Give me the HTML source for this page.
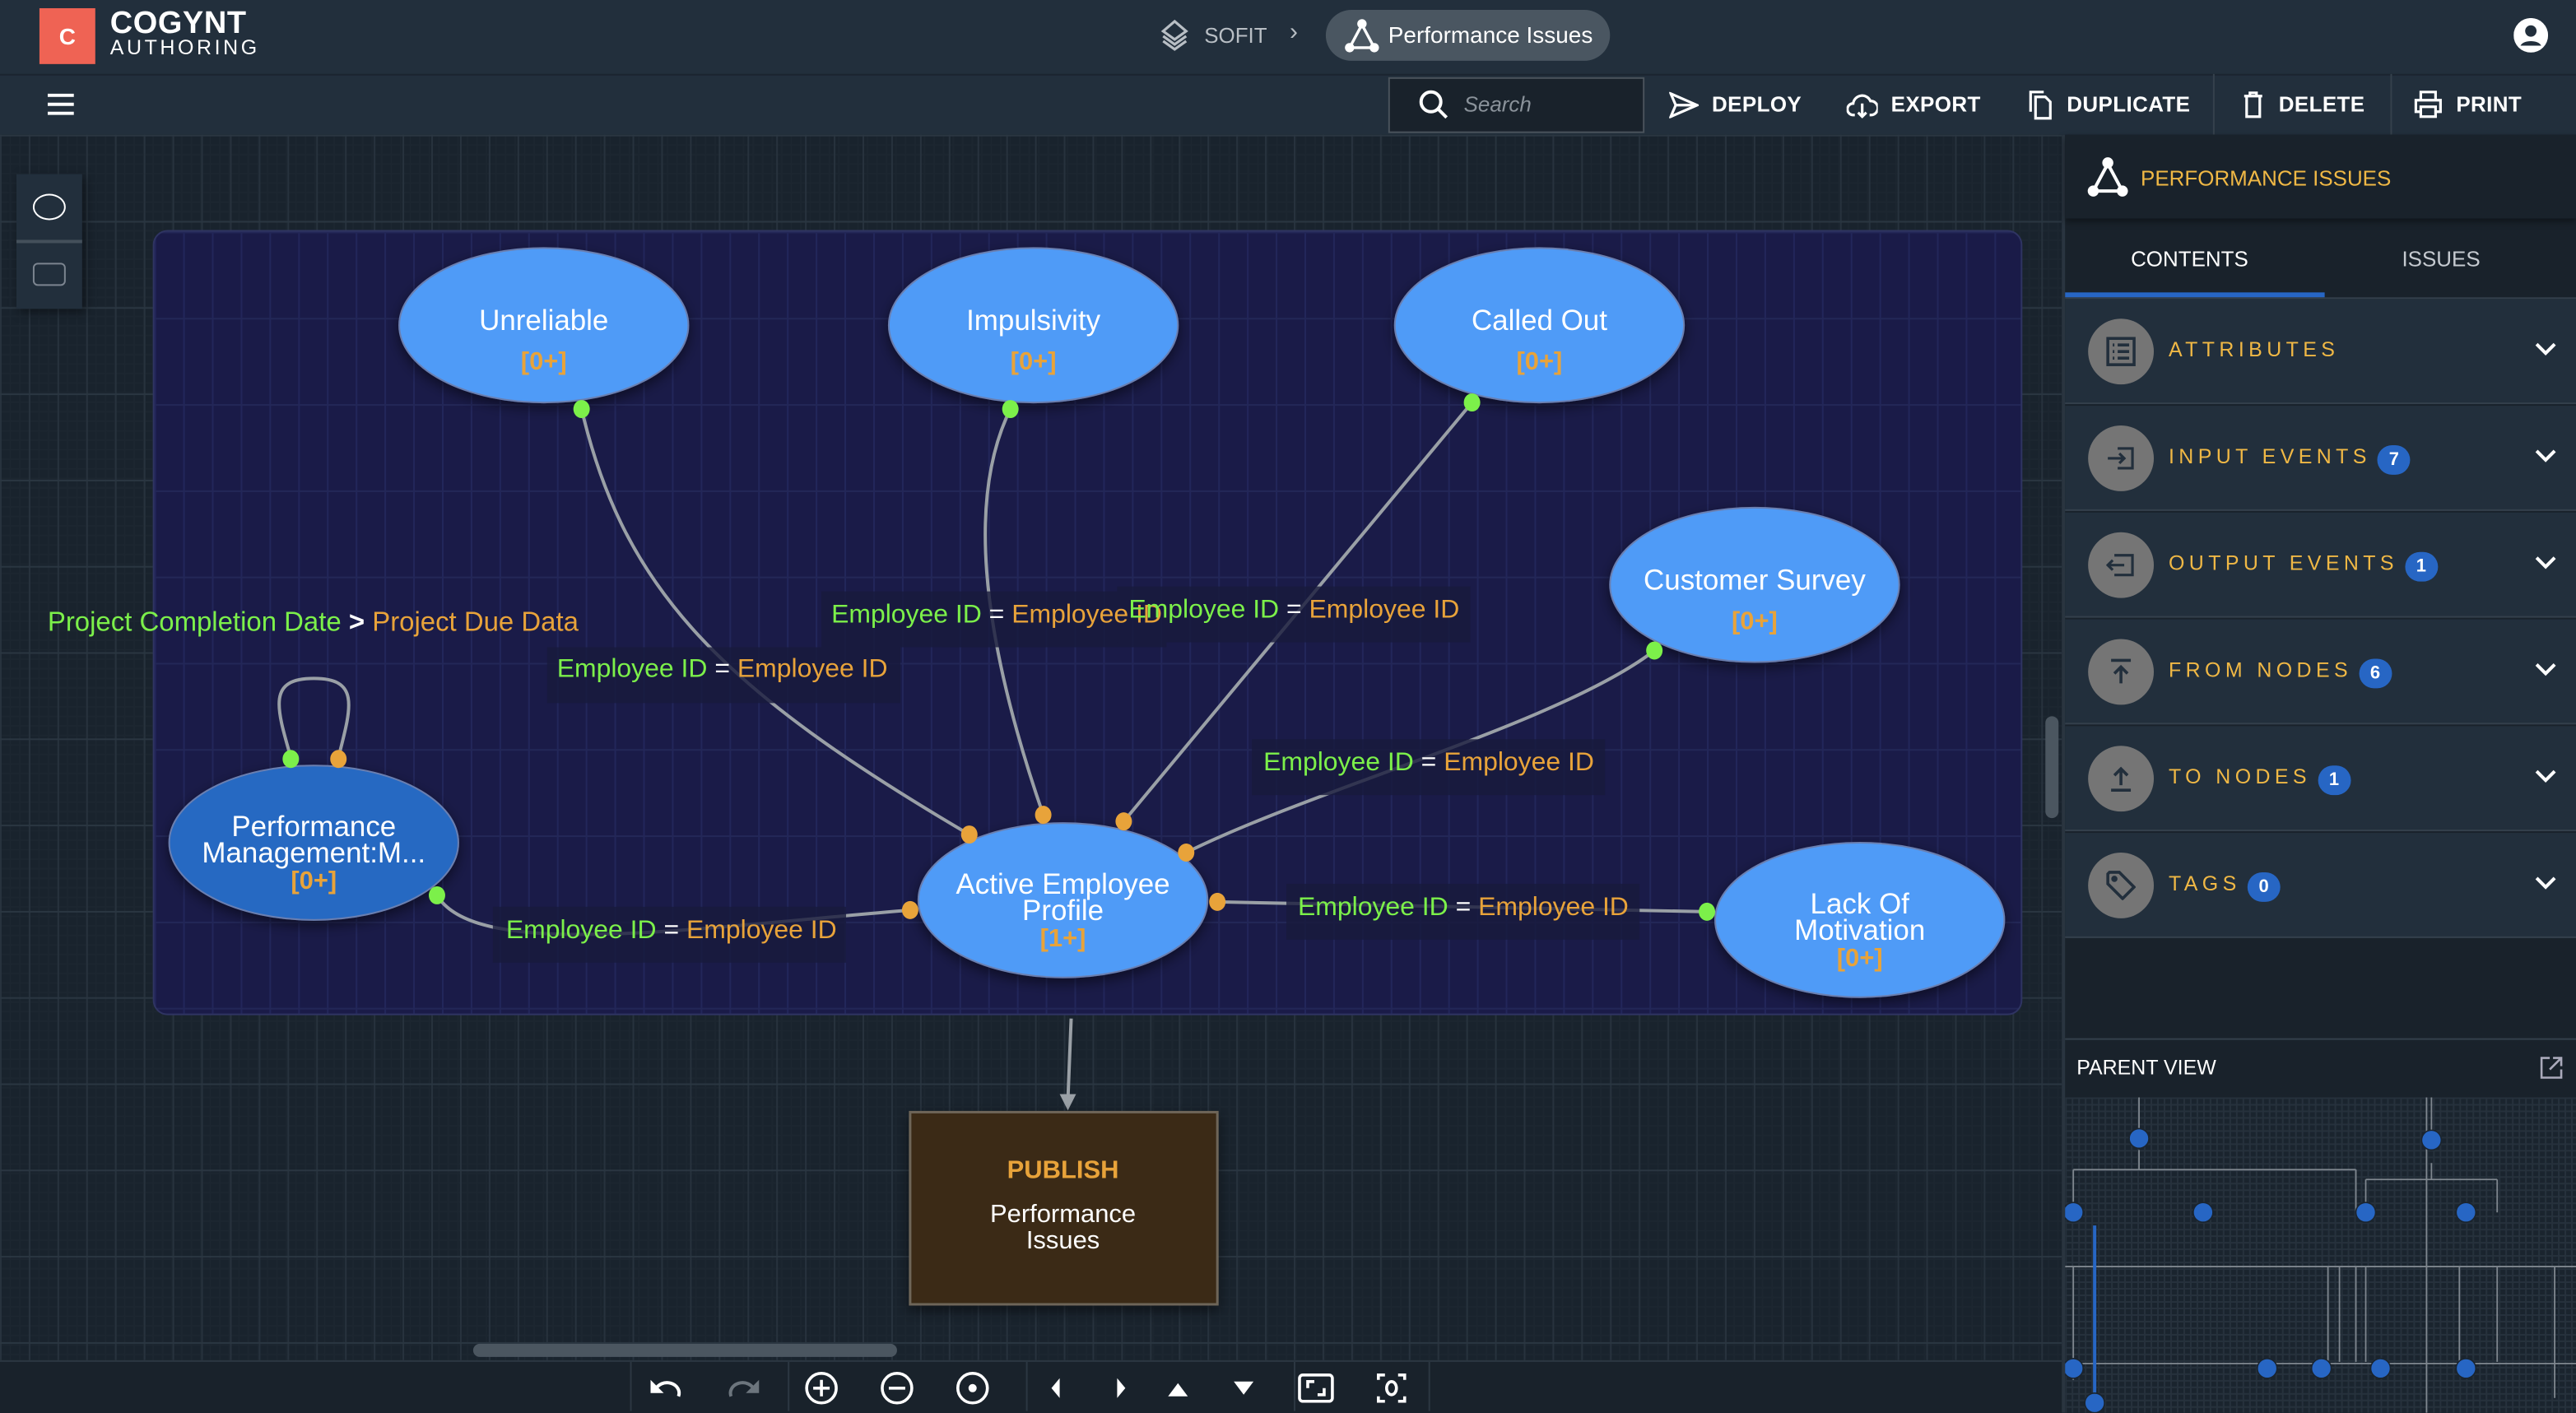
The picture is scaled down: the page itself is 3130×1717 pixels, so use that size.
<!DOCTYPE html>
<html><head><meta charset="utf-8">
<style>
*{box-sizing:border-box;margin:0;padding:0}
html,body{width:3130px;height:1717px;overflow:hidden;background:#19232d}
#root{position:absolute;left:0;top:0;width:1568px;height:860px;overflow:hidden;transform:scale(1.9962);transform-origin:0 0;font-family:"Liberation Sans",sans-serif;color:#fff;background:#19232d}
.abs{position:absolute}
.top{left:0;top:0;width:1568px;height:45px;background:#222f3c}
.bar2{left:0;top:45px;width:1568px;height:37px;background:#222f3c;border-top:1px solid #1b2530}
.canvas{left:0;top:82px;width:1255px;height:746px;background-color:#19232d;
background-image:linear-gradient(#2a3641 1px,transparent 1px),linear-gradient(90deg,#27323d 1px,transparent 1px),linear-gradient(#1c2630 1px,transparent 1px),linear-gradient(90deg,#1c2630 1px,transparent 1px);
background-size:17.5px 52.5px,17.5px 17.5px,5.8px 5.8px,5.8px 5.8px;background-position:0 0}
.btn{top:45px;height:37px;display:flex;align-items:center;font-size:13px;font-weight:bold;letter-spacing:.2px}
.btn svg{margin-right:8px}
.rp{left:1255px;top:82px;width:313px;height:778px;background:#19222b;border-left:2px solid #2a3540}
.row{position:absolute;left:2px;width:311px;height:64px;background:#222f3c;border-bottom:1px solid #34404c}
.row .ic{position:absolute;left:14px;top:12px;width:40px;height:40px;border-radius:50%;background:#757575}
.row .lb{position:absolute;left:63px;top:24px;font-size:12.5px;letter-spacing:2.7px;color:#f0b845}
.row .bd{display:inline-block;background:#2766c4;color:#fff;border-radius:10px;font-size:11px;letter-spacing:0;padding:2px 0;width:20px;height:18px;line-height:14px;text-align:center;margin-left:4px;vertical-align:-1px;font-weight:bold}
.row .cv{position:absolute;right:12px;top:26px}
.tb{left:0;top:828px;width:1255px;height:32px;background:#19222b;border-top:1px solid #2c3742}
</style></head><body><div id="root">

<div class="abs top"></div>
<div class="abs" style="left:24px;top:5px;width:34px;height:34px;background:#ef6354;color:#fff;font-weight:bold;font-size:14px;text-align:center;line-height:34px">C</div>
<div class="abs" style="left:67px;top:4px;font-size:19px;font-weight:bold;letter-spacing:.3px">COGYNT</div>
<div class="abs" style="left:67px;top:22px;font-size:12.5px;letter-spacing:1.8px">AUTHORING</div>
<svg class="abs" style="left:704px;top:11px" width="22" height="22" viewBox="0 0 22 22" fill="none" stroke="#b8bec4" stroke-width="1.6"><path d="M11 2l7 6-7 5-7-5z"/><path d="M4 11l7 5 7-5"/><path d="M4 14l7 5 7-5"/></svg>
<div class="abs" style="left:733px;top:14px;font-size:13px;color:#b8bec4">SOFIT</div>
<div class="abs" style="left:785px;top:11px;font-size:15px;color:#b8bec4">›</div>
<div class="abs" style="left:807px;top:6px;width:173px;height:31px;border-radius:16px;background:#4a5661"></div>
<svg class="abs" style="left:818px;top:11px" width="22" height="22" viewBox="0 0 22 22" fill="none" stroke="#fff" stroke-width="1.7"><circle cx="11" cy="3.5" r="2" fill="#fff"/><path d="M11 4L3.5 18M11 4l7.5 14M3.5 18h15"/><circle cx="3.5" cy="18" r="2" fill="#fff"/><circle cx="18.5" cy="18" r="2" fill="#fff"/></svg>
<div class="abs" style="left:845px;top:13px;font-size:14px">Performance Issues</div>
<svg class="abs" style="left:1530px;top:11px" width="21" height="21" viewBox="0 0 20 20"><circle cx="10" cy="10" r="10" fill="#fff"/><circle cx="10" cy="7.5" r="3.3" fill="#222f3c"/><path d="M4 16c1.5-3.5 10.5-3.5 12 0" fill="#222f3c"/></svg>

<div class="abs bar2"></div>
<svg class="abs" style="left:29px;top:57px" width="16" height="13" viewBox="0 0 16 13" fill="#fff"><rect y="0" width="16" height="2"/><rect y="5.5" width="16" height="2"/><rect y="11" width="16" height="2"/></svg>
<div class="abs" style="left:845px;top:47px;width:156px;height:34px;background:#19222b;border:1.5px solid #4a535c"></div>
<svg class="abs" style="left:863px;top:54px" width="20" height="20" viewBox="0 0 20 20" fill="none" stroke="#fff" stroke-width="2"><circle cx="8" cy="8" r="6"/><path d="M12.5 12.5l5 5"/></svg>
<div class="abs" style="left:891px;top:56px;font-size:13px;font-style:italic;color:#8a929a">Search</div>
<div class="abs btn" style="left:1016px"><svg width="18" height="16" viewBox="0 0 18 16" fill="none" stroke="#fff" stroke-width="1.6"><path d="M1 1l16 7-16 7 3-7z"/><path d="M4 8h13"/></svg>DEPLOY</div>
<div class="abs btn" style="left:1124px"><svg width="19" height="16" viewBox="0 0 19 16" fill="none" stroke="#fff" stroke-width="1.6"><path d="M5 14H4a3.5 3.5 0 0 1 0-7 5.5 5.5 0 0 1 10.5-1.5A4 4 0 0 1 15 14h-1"/><path d="M9.5 7v8M7 12.5l2.5 2.5 2.5-2.5"/></svg>EXPORT</div>
<div class="abs btn" style="left:1233px"><svg width="17" height="18" viewBox="0 0 17 18" fill="none" stroke="#fff" stroke-width="1.6"><path d="M3 13V1h8"/><path d="M6 4h6l3 3v10H6z"/></svg>DUPLICATE</div>
<div class="abs" style="left:1347px;top:45px;width:1px;height:37px;background:#35414c"></div>
<div class="abs btn" style="left:1364px"><svg width="15" height="17" viewBox="0 0 15 17" fill="none" stroke="#fff" stroke-width="1.6"><path d="M2 3.5h11M5.5 3.5V1.5h4v2M3.5 3.5v12.5h8V3.5"/></svg>DELETE</div>
<div class="abs" style="left:1455px;top:45px;width:1px;height:37px;background:#35414c"></div>
<div class="abs btn" style="left:1469px"><svg width="18" height="17" viewBox="0 0 18 17" fill="none" stroke="#fff" stroke-width="1.6"><path d="M4.5 6V1h9v5M4.5 13H1.5V6h15v7h-3"/><rect x="4.5" y="10" width="9" height="6"/></svg>PRINT</div>

<div class="abs canvas"></div>
<div class="abs" style="left:10px;top:106px;width:40px;height:82px;background:#222f3c;box-shadow:2px 2px 6px rgba(0,0,0,.4)"></div>
<div class="abs" style="left:10px;top:146px;width:40px;height:1.5px;background:#44505b"></div>
<div class="abs" style="left:20px;top:118px;width:20px;height:16px;border:1.6px solid #fff;border-radius:50%"></div>
<div class="abs" style="left:20px;top:160px;width:20px;height:14px;border:1.3px solid #7c8590;border-radius:3px"></div>
<div class="abs" style="left:93px;top:140px;width:1138px;height:478px;background:#1a1b48;border:1.5px solid #2f3462;border-radius:9px;
background-image:linear-gradient(#232757 1px,transparent 1px),linear-gradient(90deg,#22265a 1px,transparent 1px);background-size:17.5px 52.5px,17.5px 17.5px"></div>
<div class="abs" style="left:288px;top:818px;width:258px;height:8px;border-radius:4px;background:#4b5660"></div>
<div class="abs" style="left:1245px;top:436px;width:8px;height:62px;border-radius:4px;background:#4b5660"></div>

<svg class="abs" style="left:0;top:0" width="1255" height="828" viewBox="0 0 1255 828" font-family="Liberation Sans, sans-serif">
<defs><filter id="sh" x="-20%" y="-20%" width="140%" height="150%"><feDropShadow dx="0" dy="3" stdDeviation="4" flood-color="#000" flood-opacity=".5"/></filter></defs>
<g fill="none" stroke="#9aa0a6" stroke-width="2">
<path d="M354 249C380 360 440 420 590 508"/>
<path d="M615 249C590 300 595 380 635 496"/>
<path d="M896 245L684 500"/>
<path d="M1007 396C950 440 800 480 722 519"/>
<path d="M266 545C290 585 420 565 554 554"/>
<path d="M741 549L1039 555"/>
<path d="M177 461C168 430 163 413 191 413C219 413 214 430 206 461"/>
<path d="M652 620L650 670"/>
</g>
<path d="M645 666l5 10 5-10z" fill="#9aa0a6"/>
<g fill="#181a3c" opacity=".8">
<rect x="333" y="394" width="215" height="34"/><rect x="500" y="360" width="210" height="34"/><rect x="680" y="357" width="215" height="34"/><rect x="762" y="450" width="215" height="34"/><rect x="783" y="538" width="215" height="34"/><rect x="300" y="552" width="215" height="34"/>
</g>
<g font-size="16">
<text x="29" y="384" font-size="16.5"><tspan fill="#7cf04a">Project Completion Date</tspan><tspan fill="#fff" font-weight="bold"> &gt; </tspan><tspan fill="#e8a33a">Project Due Data</tspan></text>
<text x="339" y="412"><tspan fill="#7cf04a">Employee ID</tspan><tspan fill="#fff"> = </tspan><tspan fill="#e8a33a">Employee ID</tspan></text>
<text x="506" y="379"><tspan fill="#7cf04a">Employee ID</tspan><tspan fill="#fff"> = </tspan><tspan fill="#e8a33a">Employee ID</tspan></text>
<text x="687" y="376"><tspan fill="#7cf04a">Employee ID</tspan><tspan fill="#fff"> = </tspan><tspan fill="#e8a33a">Employee ID</tspan></text>
<text x="769" y="469"><tspan fill="#7cf04a">Employee ID</tspan><tspan fill="#fff"> = </tspan><tspan fill="#e8a33a">Employee ID</tspan></text>
<text x="790" y="557"><tspan fill="#7cf04a">Employee ID</tspan><tspan fill="#fff"> = </tspan><tspan fill="#e8a33a">Employee ID</tspan></text>
<text x="308" y="571"><tspan fill="#7cf04a">Employee ID</tspan><tspan fill="#fff"> = </tspan><tspan fill="#e8a33a">Employee ID</tspan></text>
</g>
<g filter="url(#sh)" stroke="#6b7fb0" stroke-width="1">
<ellipse cx="331" cy="198" rx="88" ry="47" fill="#4f9bf7"/>
<ellipse cx="629" cy="198" rx="88" ry="47" fill="#4f9bf7"/>
<ellipse cx="937" cy="198" rx="88" ry="47" fill="#4f9bf7"/>
<ellipse cx="1068" cy="356" rx="88" ry="47" fill="#4f9bf7"/>
<ellipse cx="191" cy="513" rx="88" ry="47" fill="#2769c2"/>
<ellipse cx="647" cy="548" rx="88" ry="47" fill="#4f9bf7"/>
<ellipse cx="1132" cy="560" rx="88" ry="47" fill="#4f9bf7"/>
</g>
<g font-size="17.5" fill="#fff" text-anchor="middle">
<text x="331" y="201">Unreliable</text>
<text x="629" y="201">Impulsivity</text>
<text x="937" y="201">Called Out</text>
<text x="1068" y="359">Customer Survey</text>
<text x="191" y="509">Performance</text><text x="191" y="525">Management:M...</text>
<text x="647" y="544">Active Employee</text><text x="647" y="560">Profile</text>
<text x="1132" y="556">Lack Of</text><text x="1132" y="572">Motivation</text>
</g>
<g font-size="15.5" fill="#e8a33a" font-weight="bold" text-anchor="middle">
<text x="331" y="225">[0+]</text><text x="629" y="225">[0+]</text><text x="937" y="225">[0+]</text><text x="1068" y="383">[0+]</text>
<text x="191" y="541">[0+]</text><text x="647" y="576">[1+]</text><text x="1132" y="588">[0+]</text>
</g>
<g fill="#7cf04a"><ellipse cx="354" cy="249" rx="5" ry="5.5"/><ellipse cx="615" cy="249" rx="5" ry="5.5"/><ellipse cx="896" cy="245" rx="5" ry="5.5"/><ellipse cx="1007" cy="396" rx="5" ry="5.5"/><ellipse cx="177" cy="462" rx="5" ry="5.5"/><ellipse cx="266" cy="545" rx="5" ry="5.5"/><ellipse cx="1039" cy="555" rx="5" ry="5.5"/></g>
<g fill="#e8a33a"><ellipse cx="206" cy="462" rx="5" ry="5.5"/><ellipse cx="590" cy="508" rx="5" ry="5.5"/><ellipse cx="635" cy="496" rx="5" ry="5.5"/><ellipse cx="684" cy="500" rx="5" ry="5.5"/><ellipse cx="722" cy="519" rx="5" ry="5.5"/><ellipse cx="554" cy="554" rx="5" ry="5.5"/><ellipse cx="741" cy="549" rx="5" ry="5.5"/></g>
<rect x="554" y="677" width="187" height="117" fill="#3a2c19" stroke="#6e6559" stroke-width="1.5" filter="url(#sh)"/>
<text x="647" y="717" text-anchor="middle" font-size="15.5" font-weight="bold" fill="#e8a33a">PUBLISH</text>
<text x="647" y="744" text-anchor="middle" font-size="15.5" fill="#fff">Performance</text>
<text x="647" y="760" text-anchor="middle" font-size="15.5" fill="#fff">Issues</text>
</svg>

<div class="abs tb"></div>
<svg class="abs" style="left:380px;top:829px" width="495" height="30" viewBox="0 0 495 30">
<g stroke="#2c3742" stroke-width="1"><path d="M4 0v30M100 0v30M245 0v30M408 0v30M490 0v30"/></g>
<g fill="none" stroke="#fff" stroke-width="2"><path d="M19 17a7 6 0 0 1 14 4"/></g><path d="M16 11v8h8z" fill="#fff"/>
<g fill="none" stroke="#6c757d" stroke-width="2"><path d="M65 21a7 6 0 0 1 14-4"/></g><path d="M82 11v8h-8z" fill="#6c757d"/>
<g fill="none" stroke="#fff" stroke-width="1.8"><circle cx="120" cy="16" r="9"/><path d="M120 11v10M115 16h10"/><circle cx="166" cy="16" r="9"/><path d="M161 16h10"/><circle cx="212" cy="16" r="9"/></g><circle cx="212" cy="16" r="2.5" fill="#fff"/>
<g fill="#fff"><path d="M260 16l5-6v12z"/><path d="M300 10l5 6-5 6z"/><path d="M331 21l6-8 6 8z"/><path d="M371 12h12l-6 8z"/></g>
<g fill="none" stroke="#fff" stroke-width="1.8"><rect x="411" y="8" width="20" height="16" rx="2"/><path d="M416 16v-4h4M426 16v4h-4"/><path d="M459 11V8h4M471 8h4v3M475 21v3h-4M463 24h-4v-3"/><ellipse cx="467" cy="16" rx="3" ry="4"/></g>
</svg>

<div class="abs rp"></div>
<div class="abs" style="left:1257px;top:82px;width:311px;height:51px;background:#19222b;box-shadow:0 2px 4px rgba(0,0,0,.4)"></div>
<svg class="abs" style="left:1270px;top:95px" width="26" height="26" viewBox="0 0 22 22" fill="none" stroke="#fff" stroke-width="1.7"><circle cx="11" cy="3.5" r="2" fill="#fff"/><path d="M11 4L3.5 18M11 4l7.5 14M3.5 18h15"/><circle cx="3.5" cy="18" r="2" fill="#fff"/><circle cx="18.5" cy="18" r="2" fill="#fff"/></svg>
<div class="abs" style="left:1303px;top:101px;font-size:13px;color:#f0b845">PERFORMANCE ISSUES</div>
<div class="abs" style="left:1297px;top:150px;font-size:13px">CONTENTS</div>
<div class="abs" style="left:1462px;top:150px;font-size:13px;color:#c5cad0">ISSUES</div>
<div class="abs" style="left:1257px;top:178px;width:158px;height:3px;background:#2766c4"></div>
<div class="abs" style="left:1257px;top:181px;width:311px;height:1px;background:#34404c"></div>

<div class="row" style="left:1257px;top:182px"><div class="ic"><svg style="margin:11px" width="18" height="18" viewBox="0 0 18 18" fill="none" stroke="#222f3c" stroke-width="1.8"><rect x="1" y="1" width="16" height="16"/><path d="M4 5h1M7 5h7M4 9h1M7 9h7M4 13h1M7 13h7"/></svg></div><div class="lb">ATTRIBUTES</div><svg class="cv" width="13" height="9" viewBox="0 0 13 9" fill="none" stroke="#fff" stroke-width="2"><path d="M1 1.5l5.5 5.5 5.5-5.5"/></svg></div>
<div class="row" style="left:1257px;top:247px"><div class="ic"><svg style="margin:11px" width="18" height="18" viewBox="0 0 18 18" fill="none" stroke="#222f3c" stroke-width="1.6"><path d="M1 9h10M8 6l3 3-3 3M7 3h9v12H7"/></svg></div><div class="lb">INPUT EVENTS<span class="bd">7</span></div><svg class="cv" width="13" height="9" viewBox="0 0 13 9" fill="none" stroke="#fff" stroke-width="2"><path d="M1 1.5l5.5 5.5 5.5-5.5"/></svg></div>
<div class="row" style="left:1257px;top:312px"><div class="ic"><svg style="margin:11px" width="18" height="18" viewBox="0 0 18 18" fill="none" stroke="#222f3c" stroke-width="1.6"><path d="M1 9h10M4 6L1 9l3 3M5 3h11v12H5"/></svg></div><div class="lb">OUTPUT EVENTS<span class="bd">1</span></div><svg class="cv" width="13" height="9" viewBox="0 0 13 9" fill="none" stroke="#fff" stroke-width="2"><path d="M1 1.5l5.5 5.5 5.5-5.5"/></svg></div>
<div class="row" style="left:1257px;top:377px"><div class="ic"><svg style="margin:11px" width="18" height="18" viewBox="0 0 18 18" fill="none" stroke="#222f3c" stroke-width="1.8"><path d="M3 2h12M9 16V6M5 10l4-4 4 4"/></svg></div><div class="lb">FROM NODES<span class="bd">6</span></div><svg class="cv" width="13" height="9" viewBox="0 0 13 9" fill="none" stroke="#fff" stroke-width="2"><path d="M1 1.5l5.5 5.5 5.5-5.5"/></svg></div>
<div class="row" style="left:1257px;top:442px"><div class="ic"><svg style="margin:11px" width="18" height="18" viewBox="0 0 18 18" fill="none" stroke="#222f3c" stroke-width="1.8"><path d="M3 16h12M9 13V3M5 7l4-4 4 4"/></svg></div><div class="lb">TO NODES<span class="bd">1</span></div><svg class="cv" width="13" height="9" viewBox="0 0 13 9" fill="none" stroke="#fff" stroke-width="2"><path d="M1 1.5l5.5 5.5 5.5-5.5"/></svg></div>
<div class="row" style="left:1257px;top:507px"><div class="ic"><svg style="margin:11px" width="18" height="18" viewBox="0 0 18 18" fill="none" stroke="#222f3c" stroke-width="1.8"><path d="M1 2v6l9 9 7-7-9-9H2z"/><circle cx="5" cy="5" r="1" fill="#222f3c"/></svg></div><div class="lb">TAGS<span class="bd">0</span></div><svg class="cv" width="13" height="9" viewBox="0 0 13 9" fill="none" stroke="#fff" stroke-width="2"><path d="M1 1.5l5.5 5.5 5.5-5.5"/></svg></div>

<div class="abs" style="left:1257px;top:632px;width:311px;height:1px;background:#34404c"></div>
<div class="abs" style="left:1264px;top:643px;font-size:12.5px">PARENT VIEW</div>
<svg class="abs" style="left:1546px;top:643px" width="14" height="14" viewBox="0 0 14 14" fill="none" stroke="#aab" stroke-width="1.3"><path d="M6 1H1v12h12V8M8 1h5v5M13 1L6 8"/></svg>
<div class="abs" style="left:1257px;top:668px;width:311px;height:192px;background-color:#1a242e;background-image:linear-gradient(#26313c 1px,transparent 1px),linear-gradient(90deg,#26313c 1px,transparent 1px);background-size:4px 4px"></div>
<svg class="abs" style="left:1257px;top:668px" width="311" height="192" viewBox="0 0 311 192">
<g fill="none" stroke="#7f878f" stroke-width=".9"><path d="M45 0v20M45 32v12M5 44h172M5 44v25M177 44v25M0 103h311M5 103v58M177 103v58M220 0v190M223 0v26M223 40v10M183 50h80M183 50v20M263 50v20M183 103v58M263 103v58M240 103v58M220 103v100M167 103v58M160 103v58M0 162h311M5 162v10M298 103v80"/></g>
<path d="M18 78v110" stroke="#2766c4" stroke-width="2"/>
<g fill="#2766c4" stroke="#1a242e" stroke-width=".8"><circle cx="45" cy="25" r="6"/><circle cx="223" cy="26" r="6"/><circle cx="5" cy="70" r="6"/><circle cx="84" cy="70" r="6"/><circle cx="183" cy="70" r="6"/><circle cx="244" cy="70" r="6"/><circle cx="5" cy="165" r="6"/><circle cx="123" cy="165" r="6"/><circle cx="156" cy="165" r="6"/><circle cx="192" cy="165" r="6"/><circle cx="244" cy="165" r="6"/><circle cx="18" cy="186" r="6"/></g>
</svg>
</div></body></html>
